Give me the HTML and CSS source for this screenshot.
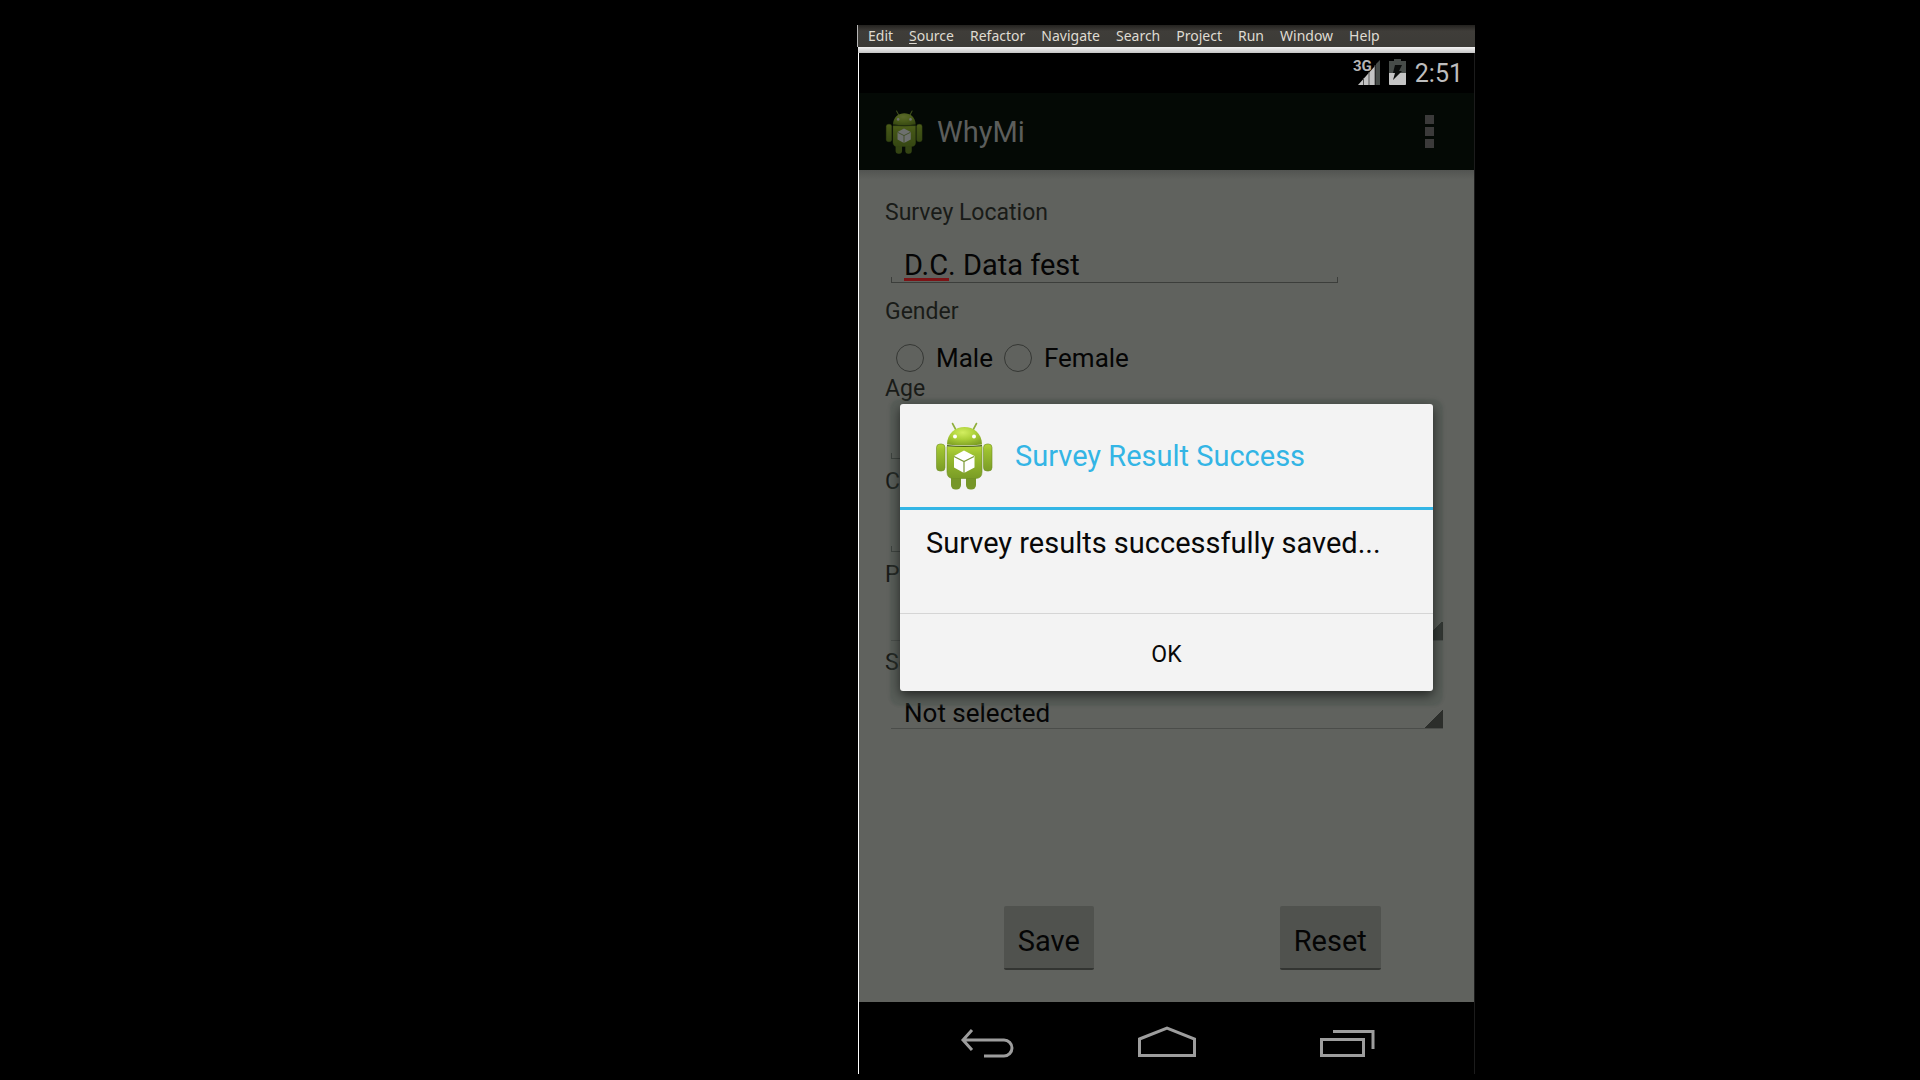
FILE: index.html
```html
<!DOCTYPE html>
<html lang="en">
<head>
<meta charset="utf-8">
<title>WhyMi</title>
<link rel="stylesheet" href="styles.css">
</head>
<body>
<svg class="defs" aria-hidden="true">
  <defs>
    <linearGradient id="skin" x1="0" y1="0" x2="0" y2="1">
      <stop offset="0" stop-color="#b4d438"/><stop offset="0.25" stop-color="#9cc030"/><stop offset="1" stop-color="#7a9c26"/>
    </linearGradient>
    <radialGradient id="dome" cx="0.45" cy="0.3" r="0.75">
      <stop offset="0" stop-color="#d2ee60"/><stop offset="0.5" stop-color="#abcf38"/><stop offset="1" stop-color="#7d9f24"/>
    </radialGradient>
    <symbol id="robot" viewBox="15 11 58 68">
      <path d="M32.500 12.500l3.500 6.500M56.500 12.500l-3.500 6.500" stroke="#8fae3c" stroke-width="1.600" stroke-linecap="round"/>
      <rect x="31" y="62" width="10" height="16.500" rx="4.500" fill="#769628"/>
      <rect x="46" y="62" width="10" height="16.500" rx="4.500" fill="#769628"/>
      <rect x="16.500" y="33" width="8.500" height="27" rx="3.500" fill="url(#skin)" stroke="#6f8f24" stroke-width=".6"/>
      <rect x="63.500" y="33" width="8.500" height="27" rx="3.500" fill="url(#skin)" stroke="#6f8f24" stroke-width=".6"/>
      <path d="M27 35.500h35V61q0 6.500-6.500 6.500h-22Q27 67.500 27 61z" fill="url(#skin)" stroke="#6f8f24" stroke-width=".6"/>
      <path d="M27 33.500C27 10 62 10 62 33.500q-17.500 2-35 0z" fill="url(#dome)"/>
      <path d="M27 34.500q17.500 2 35 0" fill="none" stroke="#4d661a" stroke-width="1.200"/>
      <circle cx="35" cy="25.500" r="2" fill="#fff"/><circle cx="54" cy="25.500" r="2" fill="#fff"/>
      <path d="M44 39.500l10.500 5.500v11.500L44 62l-10-5.500V45z" fill="#fff"/>
      <path d="M34 45.500l10 5 10-5M44 50.500V62" fill="none" stroke="#7c9a35" stroke-width="1.200"/>
    </symbol>
  </defs>
</svg>

<main class="stage">
  <nav class="menubar">
    <button type="button">Edit</button>
    <button type="button"><u>S</u>ource</button>
    <button type="button">Refactor</button>
    <button type="button">Navigate</button>
    <button type="button">Search</button>
    <button type="button">Project</button>
    <button type="button">Run</button>
    <button type="button">Window</button>
    <button type="button">Help</button>
  </nav>
  <div class="toolbar-strip"></div>

  <section class="phone">
    <header class="status">
      <svg class="signal" viewBox="0 0 28 28" aria-label="3G signal">
        <path d="M27 2v25h-4V6z" fill="#474c49"/>
        <path d="M5 27h17V8z" fill="#c4c4c4"/>
        <path d="M10.500 20v7M16 14v13M22 7v20" stroke="#555" stroke-width="1"/>
        <text x="0" y="13" class="signal-label">3G</text>
      </svg>
      <svg class="battery" viewBox="0 0 17 26" aria-label="Battery charging">
        <path d="M5 0h7v2h5v23q0 1-1 1H1q-1 0-1-1V2h5z" fill="#474c49"/>
        <path d="M0 14h17v11q0 1-1 1H1q-1 0-1-1z" fill="#c4c4c4"/>
        <path d="M6 6h7l-3 6h3L4 21l2-7H4z" fill="#0b0d0c"/>
      </svg>
      <time class="clock">2:51</time>
    </header>

    <div class="app">
      <header class="actionbar">
        <svg class="actionbar-icon"><use href="#robot"/></svg>
        <h1>WhyMi</h1>
        <button type="button" class="overflow" aria-label="More options"><i></i><i></i><i></i></button>
      </header>

      <form class="survey">
        <label for="location">Survey Location</label>
        <input id="location" class="field misspelt" type="text" value="D.C. Data fest" spellcheck="false">

        <fieldset class="gender">
          <legend>Gender</legend>
          <div class="choices">
            <label><input type="radio" name="gender">Male</label>
            <label><input type="radio" name="gender">Female</label>
          </div>
        </fieldset>

        <label for="age">Age</label>
        <input id="age" class="field" type="text">
        <label for="c">C</label>
        <input id="c" class="field" type="text">
        <label for="p">P</label>
        <select id="p" class="spinner"><option></option></select>
        <label for="s">Se</label>
        <select id="s" class="spinner"><option>Not selected</option></select>

        <div class="actions">
          <button type="button">Save</button>
          <button type="button">Reset</button>
        </div>
      </form>

      <div class="overlay">
        <section class="dialog" role="dialog" aria-labelledby="dialog-title">
          <header>
            <svg class="dialog-icon"><use href="#robot"/></svg>
            <h2 id="dialog-title">Survey Result Success</h2>
          </header>
          <p>Survey results successfully saved...</p>
          <button type="button">OK</button>
        </section>
      </div>
    </div>

    <nav class="navbar">
      <button type="button" aria-label="Back">
        <svg viewBox="0 0 58 32"><path d="M13 4L4 14l9 10M4 14h41a8 8 0 0 1 0 16H25"/></svg>
      </button>
      <button type="button" aria-label="Home">
        <svg viewBox="0 0 58 32"><path d="M1.500 13L29 2l27.500 11v16.500h-55z"/></svg>
      </button>
      <button type="button" aria-label="Recent apps">
        <svg viewBox="0 0 58 32"><path d="M3.500 13.500h42v16h-42zM15 5.500h40V23"/></svg>
      </button>
    </nav>
  </section>
</main>
</body>
</html>
```
FILE: styles.css
```css
* { box-sizing: border-box; }

body {
  margin: 0;
  min-height: 100vh;
  display: grid;
  grid-template-columns: 858fr 617fr 445fr;
  background: #000;
  font-family: Roboto, "Noto Sans", sans-serif;
}

h1, h2, p { margin: 0; font-weight: 400; }

button {
  margin: 0;
  padding: 0;
  border: 0;
  background: none;
  color: inherit;
  font: inherit;
}

.defs { position: absolute; width: 0; height: 0; }

.stage {
  grid-column: 2;
  display: flex;
  flex-direction: column;
  padding: 25px 0 6px;
}

/* Desktop window chrome */
.menubar {
  display: flex;
  gap: 16px;
  height: 22px;
  padding-left: 10px;
  background: linear-gradient(#23221f, #3f3d39 6px, #3c3b37);
  box-shadow: -1px 0 #b5b5b5;
  color: #dfdbd2;
  font: 14px/22px "Noto Sans", sans-serif;
}

.menubar button { line-height: 22px; }
.menubar u { text-underline-offset: 2px; }

.toolbar-strip {
  height: 6px;
  background: linear-gradient(#f4f4f4, #c4c4c4);
}

/* Phone */
.phone {
  flex: 1;
  display: flex;
  flex-direction: column;
  border-left: 1px solid #fff;
  border-right: 1px solid #1c1c1c;
}

.status {
  display: flex;
  justify-content: flex-end;
  align-items: center;
  height: 40px;
  padding: 0 11px 2px;
}

.signal { width: 28px; height: 28px; margin-right: 8px; }
.signal-label { font: 700 15px "Liberation Sans Narrow", Roboto, sans-serif; fill: #b5b5b5; }
.battery { width: 17px; height: 26px; margin-right: 9px; }
.clock { color: #bdbdbd; font-size: 25px; line-height: 32px; padding-top: 3px; }

.app {
  position: relative;
  flex: 1;
  display: flex;
  flex-direction: column;
}

.actionbar {
  display: flex;
  align-items: center;
  height: 77px;
  padding: 0 40px 0 26px;
  background: #040905;
  color: #5c5e5c;
}

.actionbar-icon { width: 38px; height: 44px; margin-right: 14px; opacity: .42; }
.actionbar h1 { flex: 1; font-size: 29px; line-height: 34px; }
.overflow { display: grid; gap: 3px; }
.overflow i { width: 9px; height: 9px; background: #3b3a3a; }

.survey {
  flex: 1;
  display: flex;
  flex-direction: column;
  padding: 29px 26px 32px;
  background: linear-gradient(#525451, #60625e 10px);
  color: #191b18;
  font-size: 23px;
  line-height: 28px;
}

.field {
  width: 447px;
  max-width: 100%;
  height: 57px;
  margin: 0 0 8px 6px;
  padding: 20px 13px 2px;
  border: 0;
  border-radius: 0;
  background:
    linear-gradient(#3c3e3b, #3c3e3b) left 0 bottom 1px / 100% 1px no-repeat,
    linear-gradient(#3c3e3b, #3c3e3b) left 0 bottom 1px / 1px 6px no-repeat,
    linear-gradient(#3c3e3b, #3c3e3b) right 0 bottom 1px / 1px 6px no-repeat;
  color: #050505;
  font: 29px/34px Roboto, sans-serif;
}

.misspelt {
  background:
    linear-gradient(#7c1416, #7c1416) left 13px bottom 3px / 45px 3px no-repeat,
    linear-gradient(#3c3e3b, #3c3e3b) left 0 bottom 1px / 100% 1px no-repeat,
    linear-gradient(#3c3e3b, #3c3e3b) left 0 bottom 1px / 1px 6px no-repeat,
    linear-gradient(#3c3e3b, #3c3e3b) right 0 bottom 1px / 1px 6px no-repeat;
}

.gender { margin: 6px 0 0; padding: 0; border: 0; }
.gender legend { padding: 0; }

.choices {
  display: flex;
  gap: 11px;
  padding: 15px 0 0 11px;
  color: #050505;
  font-size: 26px;
  line-height: 34px;
}

.choices label { display: flex; align-items: center; gap: 12px; }

.choices input {
  appearance: none;
  width: 28px;
  height: 28px;
  margin: 0;
  border: 1px solid #353734;
  border-radius: 50%;
}

.spinner {
  appearance: none;
  height: 52px;
  margin: 0 5px 8px 6px;
  padding: 20px 13px 0;
  border: 0;
  border-bottom: 1px solid #4b4d4a;
  border-radius: 0;
  background: linear-gradient(135deg, transparent 50%, #2c2e2b 50%) right bottom / 19px 19px no-repeat;
  color: #050505;
  font: 26px/30px Roboto, sans-serif;
}

.actions {
  display: grid;
  grid-template-columns: 1fr 1fr;
  justify-items: center;
  margin: auto -23px 0 23px;
}

.actions button {
  padding: 18px 14px 10px;
  border-bottom: 2px solid #333532;
  border-radius: 2px;
  background: #50524e;
  color: #050505;
  font-size: 29px;
  line-height: 34px;
}

/* Dialog */
.overlay {
  position: absolute;
  inset: 0;
  display: grid;
  align-items: center;
  padding: 0 41px;
}

.dialog {
  display: flex;
  flex-direction: column;
  border-radius: 3px;
  background: #f3f3f3;
  box-shadow: 0 4px 12px rgba(0, 0, 0, .6), 0 5px 2px 10px rgba(70, 84, 76, .3);
  color: #080808;
}

.dialog header {
  display: flex;
  align-items: center;
  gap: 22px;
  height: 106px;
  padding-left: 35px;
  border-bottom: 3px solid #33b5e5;
}

.dialog-icon { width: 58px; height: 68px; }
.dialog h2 { color: #33b5e5; font-size: 29px; line-height: 34px; }
.dialog p { padding: 16px 26px 53px; font-size: 29px; line-height: 34px; }

.dialog button {
  height: 78px;
  padding-top: 4px;
  border-top: 1px solid #d5d5d5;
  font-size: 23px;
  line-height: 28px;
}

/* System navigation */
.navbar {
  display: grid;
  grid-template-columns: repeat(3, 1fr);
  place-items: center;
  height: 72px;
  padding: 8px 37px 0 39px;
}

.navbar svg {
  display: block;
  width: 58px;
  height: 32px;
  fill: none;
  stroke: #9d9d9d;
  stroke-width: 3;
}
```
